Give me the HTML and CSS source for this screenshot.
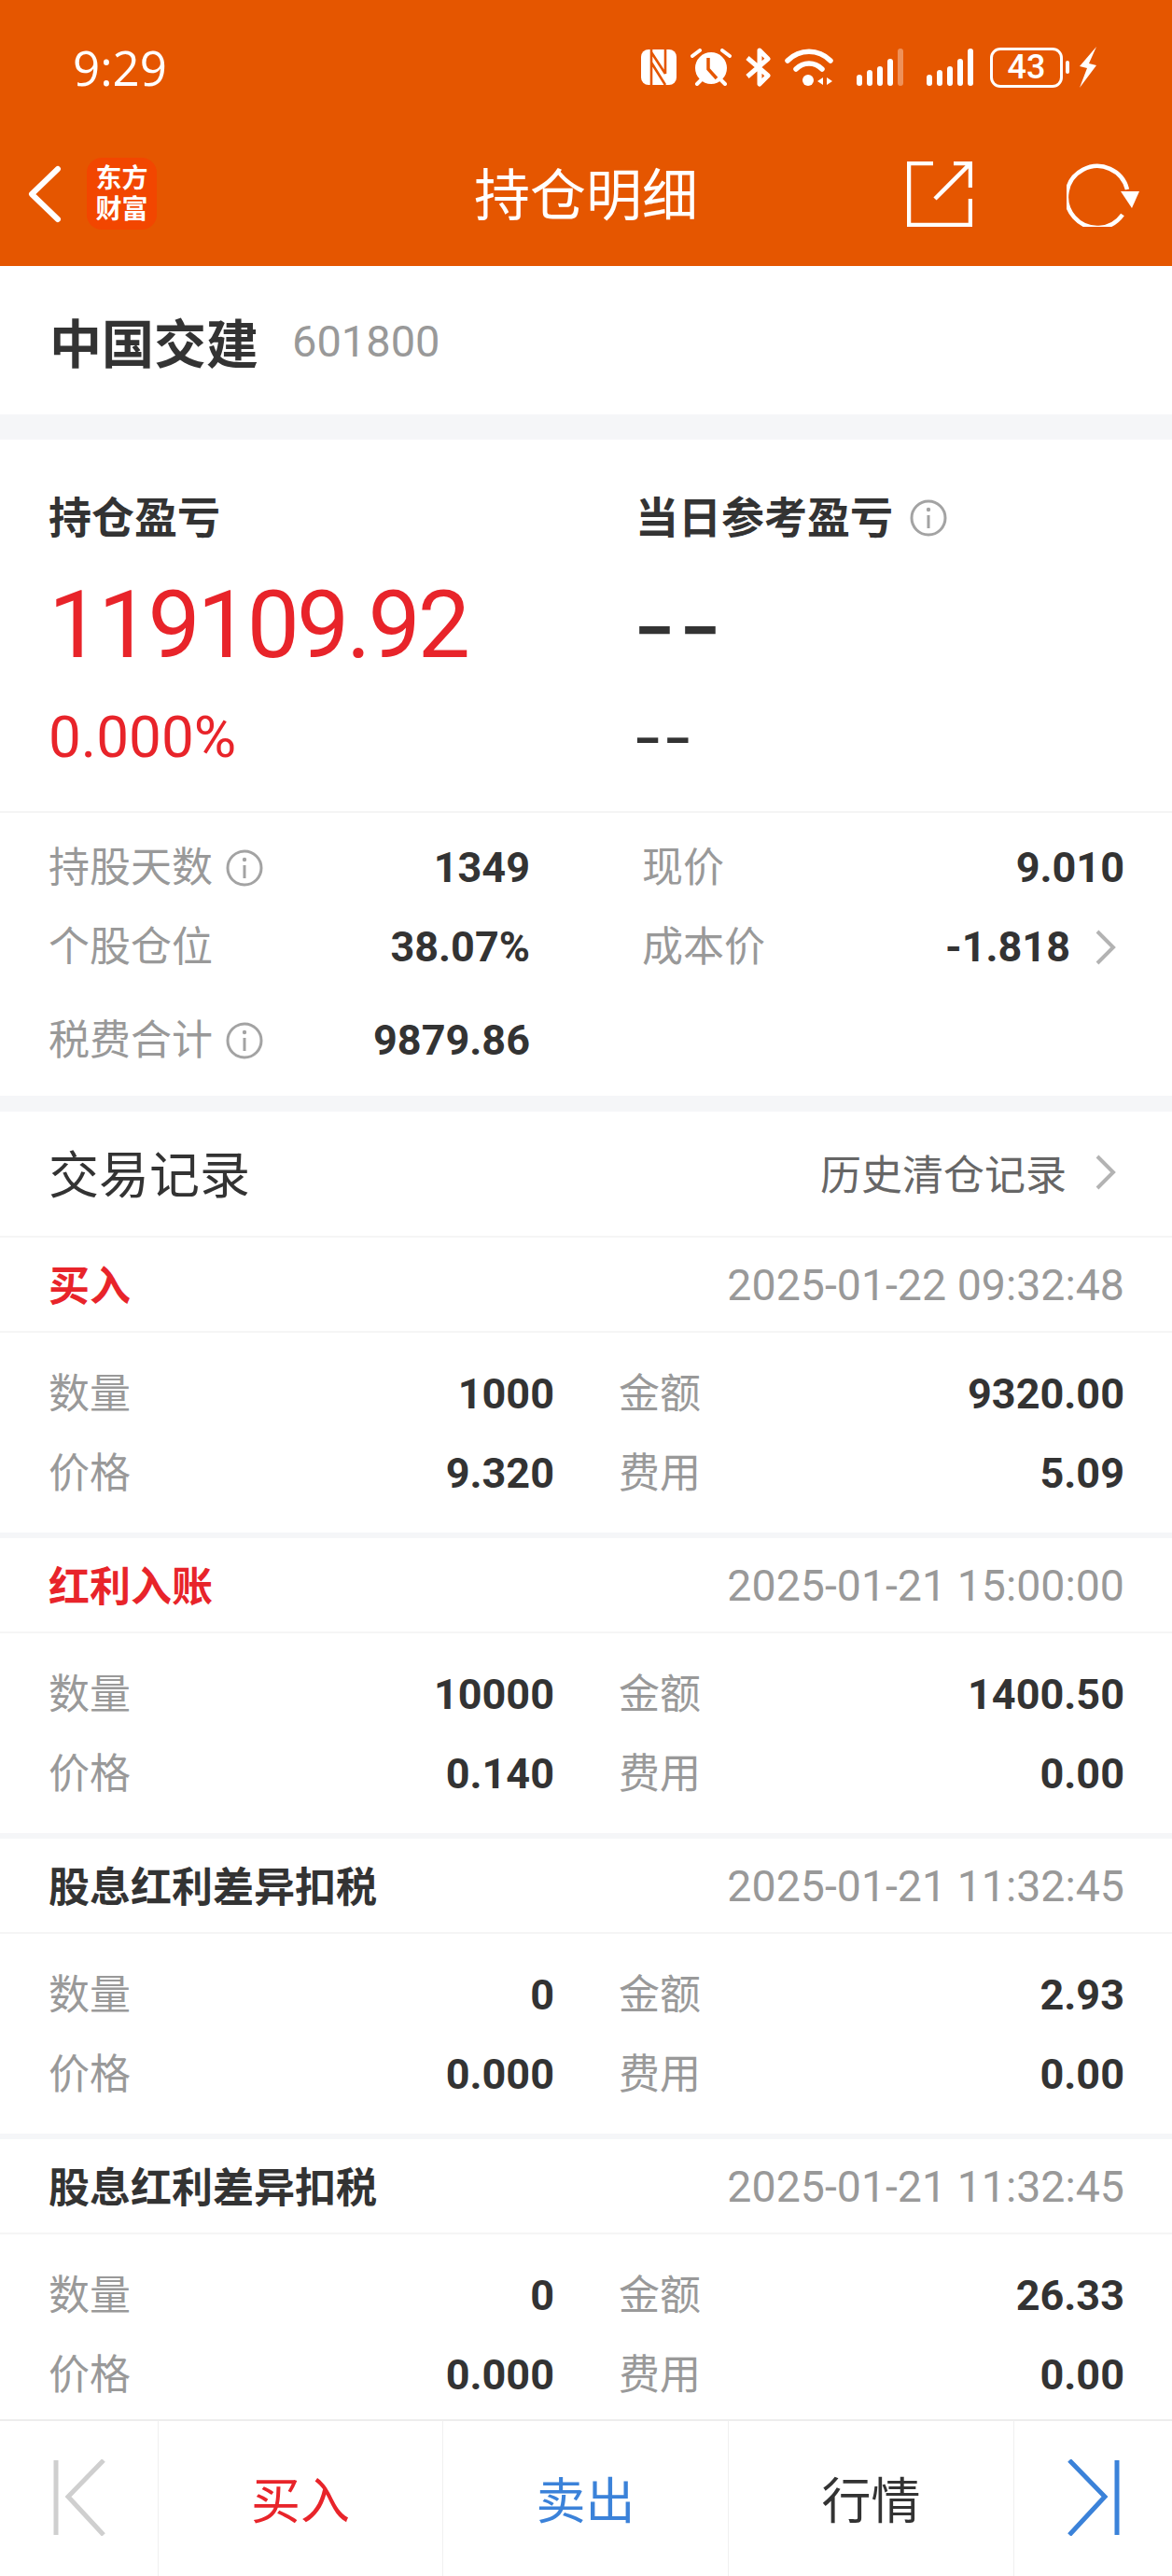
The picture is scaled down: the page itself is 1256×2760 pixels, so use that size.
FILE: index.html
```html
<!DOCTYPE html>
<html lang="zh-CN">
<head>
    <meta charset="UTF-8">
    <meta name="viewport" content="width=device-width, initial-scale=1.0">
    <title>持仓明细</title>
    <link rel="stylesheet" href="styles.css">
</head>
<body>
    <div class="app">
        <header class="topbar">
            <div class="status-bar">
                <span class="clock">9:29</span>
                <div class="status-icons">
                    <svg class="ic-nfc" width="38" height="38" viewBox="0 0 38 38"><rect width="38" height="38" rx="8" fill="#fff"/><path d="M11 0v38M26 0v26M11 3l15 23M11 14l15 24" fill="none" stroke="#e55600" stroke-width="2.6"/></svg>
                    <svg class="ic-alarm" width="44" height="40" viewBox="0 0 44 40"><circle cx="22" cy="21" r="17" fill="#fff"/><path d="M19 10v12l9 10" fill="none" stroke="#e55600" stroke-width="3.5"/><path d="M2 8l8-6M42 8l-8-6M7 38l4-4M37 38l-4-4" fill="none" stroke="#fff" stroke-width="4" stroke-linecap="round"/></svg>
                    <svg class="ic-bt" width="30" height="42" viewBox="0 0 30 42"><path d="M3 11l22 19-9 9V3l9 9-22 19" fill="none" stroke="#fff" stroke-width="5" stroke-linejoin="round"/></svg>
                    <svg class="ic-wifi" width="52" height="40" viewBox="0 0 52 40"><path d="M3 13c13-13 33-13 46 0M12 22c8-8 20-8 28 0" fill="none" stroke="#fff" stroke-width="5.5" stroke-linecap="round"/><circle cx="25" cy="34" r="6" fill="#fff"/><path d="M41 31v8l-6-4zM45 31v8l6-4z" fill="#fff"/></svg>
                    <svg class="ic-signal" width="51" height="40" viewBox="0 0 51 40"><rect y="28" width="6" height="12" rx="3" fill="#fff"/><rect x="11" y="23" width="6" height="17" rx="3" fill="#fff"/><rect x="22" y="19" width="6" height="21" rx="3" fill="#fff"/><rect x="33" y="11" width="6" height="29" rx="3" fill="#fff"/><rect x="44" width="6" height="40" rx="3" fill="#fff" fill-opacity=".35"/></svg>
                    <svg class="ic-signal" width="51" height="40" viewBox="0 0 51 40"><rect y="28" width="6" height="12" rx="3" fill="#fff"/><rect x="11" y="23" width="6" height="17" rx="3" fill="#fff"/><rect x="22" y="19" width="6" height="21" rx="3" fill="#fff"/><rect x="33" y="11" width="6" height="29" rx="3" fill="#fff"/><rect x="44" width="6" height="40" rx="3" fill="#fff"/></svg>
                    <div class="battery"><span>43</span></div>
                    <span class="battery-nub"></span>
                    <svg class="ic-bolt" width="22" height="44" viewBox="0 0 22 44"><path fill="#fff" d="M20 0L2 21l8 2L2 44l18-24-8-2z"/></svg>
                </div>
            </div>
            <nav class="nav-bar">
                <div class="nav-left">
                    <svg class="ic-back" width="36" height="62" viewBox="0 0 36 62"><path d="M32 4L4 31l28 27" fill="none" stroke="#fff" stroke-width="6" stroke-linecap="round" stroke-linejoin="round"/></svg>
                    <div class="logo"><span>东方</span><span>财富</span></div>
                </div>
                <h1>持仓明细</h1>
                <div class="nav-right">
                    <svg width="70" height="70" viewBox="0 0 70 70"><path d="M28 2H2v66h66V40M50 2h18v26M68 2L30 40" fill="none" stroke="#fff" stroke-width="4.5"/></svg>
                    <svg width="78" height="70" viewBox="0 0 78 70"><path d="M60 57A33 33 0 1 1 65 30" fill="none" stroke="#fff" stroke-width="4.5"/><path d="M58 32h20L70 50z" fill="#fff"/></svg>
                </div>
            </nav>
        </header>

        <main class="content">
            <section class="stock-name">
                <span class="name">中国交建</span>
                <span class="code">601800</span>
            </section>

            <section class="summary">
                <div class="summary-col">
                    <div class="summary-label">持仓盈亏</div>
                    <div class="summary-big red">119109.92</div>
                    <div class="summary-pct red">0.000%</div>
                </div>
                <div class="summary-col">
                    <div class="summary-label">当日参考盈亏
                        <svg class="info" width="40" height="40" viewBox="0 0 40 40"><use href="#info-icon"/></svg>
                    </div>
                    <div class="summary-big dash-big">--</div>
                    <div class="summary-pct dash-small">--</div>
                </div>
            </section>

            <section class="stats">
                <div class="stat-row">
                    <div class="stat-left">
                        <span class="muted">持股天数
                            <svg class="info" width="40" height="40" viewBox="0 0 40 40"><use href="#info-icon"/></svg>
                        </span>
                        <b>1349</b>
                    </div>
                    <div class="stat-right">
                        <span class="muted">现价</span>
                        <b>9.010</b>
                    </div>
                </div>
                <div class="stat-row">
                    <div class="stat-left">
                        <span class="muted">个股仓位</span>
                        <b>38.07%</b>
                    </div>
                    <div class="stat-right">
                        <span class="muted">成本价</span>
                        <b class="with-arrow">-1.818
                            <svg class="chevron" width="24" height="40" viewBox="0 0 24 40"><path d="M3 3l17 17L3 37" fill="none" stroke="#b3b3b3" stroke-width="4"/></svg>
                        </b>
                    </div>
                </div>
                <div class="stat-row tax">
                    <div class="stat-left">
                        <span class="muted">税费合计
                            <svg class="info" width="40" height="40" viewBox="0 0 40 40"><use href="#info-icon"/></svg>
                        </span>
                        <b>9879.86</b>
                    </div>
                </div>
            </section>

            <section class="trades">
                <div class="trades-head">
                    <span class="trades-title">交易记录</span>
                    <span class="trades-link">历史清仓记录
                        <svg class="chevron" width="24" height="40" viewBox="0 0 24 40"><path d="M3 3l17 17L3 37" fill="none" stroke="#b3b3b3" stroke-width="4"/></svg>
                    </span>
                </div>

                <article class="trade">
                    <div class="trade-head"><b class="red">买入</b><span class="muted">2025-01-22 09:32:48</span></div>
                    <div class="trade-body">
                        <div class="cell"><span class="muted">数量</span><b>1000</b></div>
                        <div class="cell"><span class="muted">金额</span><b>9320.00</b></div>
                        <div class="cell"><span class="muted">价格</span><b>9.320</b></div>
                        <div class="cell"><span class="muted">费用</span><b>5.09</b></div>
                    </div>
                </article>

                <article class="trade">
                    <div class="trade-head"><b class="red">红利入账</b><span class="muted">2025-01-21 15:00:00</span></div>
                    <div class="trade-body">
                        <div class="cell"><span class="muted">数量</span><b>10000</b></div>
                        <div class="cell"><span class="muted">金额</span><b>1400.50</b></div>
                        <div class="cell"><span class="muted">价格</span><b>0.140</b></div>
                        <div class="cell"><span class="muted">费用</span><b>0.00</b></div>
                    </div>
                </article>

                <article class="trade">
                    <div class="trade-head"><b>股息红利差异扣税</b><span class="muted">2025-01-21 11:32:45</span></div>
                    <div class="trade-body">
                        <div class="cell"><span class="muted">数量</span><b>0</b></div>
                        <div class="cell"><span class="muted">金额</span><b>2.93</b></div>
                        <div class="cell"><span class="muted">价格</span><b>0.000</b></div>
                        <div class="cell"><span class="muted">费用</span><b>0.00</b></div>
                    </div>
                </article>

                <article class="trade">
                    <div class="trade-head"><b>股息红利差异扣税</b><span class="muted">2025-01-21 11:32:45</span></div>
                    <div class="trade-body">
                        <div class="cell"><span class="muted">数量</span><b>0</b></div>
                        <div class="cell"><span class="muted">金额</span><b>26.33</b></div>
                        <div class="cell"><span class="muted">价格</span><b>0.000</b></div>
                        <div class="cell"><span class="muted">费用</span><b>0.00</b></div>
                    </div>
                </article>
            </section>
        </main>

        <footer class="bottom-bar">
            <div class="tab tab-edge">
                <svg width="56" height="82" viewBox="0 0 56 82"><path d="M3 1v80M54 1L16 40l38 41" fill="none" stroke="#cfcfcf" stroke-width="5"/></svg>
            </div>
            <div class="tab red">买入</div>
            <div class="tab blue">卖出</div>
            <div class="tab">行情</div>
            <div class="tab tab-edge">
                <svg width="56" height="82" viewBox="0 0 56 82"><path d="M53 1v80M2 1l38 39L2 81" fill="none" stroke="#3b82d9" stroke-width="5"/></svg>
            </div>
        </footer>
    </div>

    <svg class="defs" width="0" height="0">
        <symbol id="info-icon" viewBox="0 0 40 40">
            <circle cx="20" cy="20" r="18" fill="none" stroke="#a3a3a3" stroke-width="3"/>
            <path d="M20 17v14" stroke="#a3a3a3" stroke-width="3"/>
            <circle cx="20" cy="11" r="2.2" fill="#a3a3a3"/>
        </symbol>
    </svg>
</body>
</html>
```

FILE: styles.css
```css
* {
    margin: 0;
    padding: 0;
    box-sizing: border-box;
}

body {
    background: #fff;
    font-family: Roboto, "Noto Sans CJK SC", sans-serif;
    color: #333;
}

.app {
    width: 1256px;
    height: 2760px;
    display: flex;
    flex-direction: column;
    overflow: hidden;
}

.defs {
    position: absolute;
}

.red {
    color: #e8242a;
}

.blue {
    color: #3b82d9;
}

.muted {
    color: #999;
    font-weight: 400;
}

/* top */
.topbar {
    height: 285px;
    flex: none;
    background: #e55600;
    color: #fff;
}

.status-bar {
    height: 145px;
    padding: 47px 0 0 78px;
    display: flex;
    justify-content: space-between;
    align-items: flex-start;
}

.clock {
    font-size: 51px;
    line-height: 50px;
    font-weight: 500;
    font-family: "Open Sans", sans-serif;
}

.status-icons {
    display: flex;
    align-items: center;
    height: 44px;
    margin: 3px 79px 0 0;
}

.ic-nfc {
    margin-right: 15px;
}

.ic-alarm {
    margin-right: 14px;
}

.ic-bt {
    margin-right: 13px;
}

.ic-wifi {
    margin-right: 25px;
}

.ic-signal {
    margin-right: 24px;
}

.ic-signal + .ic-signal {
    margin-right: 17px;
}

.battery {
    width: 78px;
    height: 43px;
    border: 3px solid #fff;
    border-radius: 11px;
    display: flex;
    align-items: center;
    justify-content: center;
    font-size: 36px;
    font-weight: 500;
}

.battery-nub {
    width: 4px;
    height: 14px;
    background: #fff;
    border-radius: 2px;
    margin: 0 9px 0 3px;
}

.nav-bar {
    height: 140px;
    display: grid;
    grid-template-columns: 1fr auto 1fr;
    align-items: center;
    padding: 0 30px 15px;
}

.nav-bar h1 {
    font-size: 60px;
    font-weight: 400;
    line-height: 70px;
    margin-top: 7px;
}

.nav-left {
    display: flex;
    align-items: center;
    gap: 27px;
}

.logo {
    width: 75px;
    height: 77px;
    border-radius: 16px;
    background: #f24600;
    display: flex;
    flex-direction: column;
    align-items: center;
    justify-content: center;
    font-size: 28px;
    line-height: 33px;
    font-weight: 700;
}

.nav-right {
    display: flex;
    justify-content: flex-end;
    gap: 101px;
    padding-right: 5px;
}

/* content */
.content {
    flex: 1;
    min-height: 0;
    overflow: hidden;
}

.stock-name {
    height: 186px;
    padding-left: 53px;
    border-bottom: 27px solid #f5f6f8;
    display: flex;
    align-items: center;
    gap: 36px;
}

.name {
    font-size: 56px;
    font-weight: 700;
}

.code {
    font-size: 47px;
    color: #999;
    margin-top: 2px;
}

.summary {
    display: grid;
    grid-template-columns: 629px 1fr;
    padding: 59px 0 44px 52px;
    border-bottom: 2px solid #f5f5f5;
}

.summary-label {
    font-size: 46px;
    line-height: 50px;
    font-weight: 700;
    display: flex;
    align-items: center;
    gap: 18px;
}

.summary-big {
    font-size: 100px;
    line-height: 110px;
    margin-top: 35px;
    letter-spacing: -3px;
}

.summary-pct {
    font-size: 62px;
    line-height: 70px;
    margin-top: 30px;
}

.dash-big {
    font-family: Inter, sans-serif;
    font-size: 102px;
    letter-spacing: 2px;
    margin-left: -3px;
}

.dash-small {
    font-family: Inter, sans-serif;
    font-size: 70px;
    letter-spacing: 0;
    margin-left: -3px;
}

.stats {
    padding: 29px 51px 29px 52px;
    border-bottom: 17px solid #f5f6f8;
}

.stat-row {
    display: flex;
    height: 60px;
    margin-bottom: 25px;
    font-size: 45px;
    line-height: 60px;
}

.stat-row.tax {
    margin: 40px 0 0;
}

.stat-left {
    width: 516px;
    display: flex;
    justify-content: space-between;
    align-items: center;
}

.stat-right {
    margin-left: 120px;
    flex: 1;
    display: flex;
    justify-content: space-between;
    align-items: center;
}

.stat-row .muted {
    display: flex;
    align-items: center;
    gap: 14px;
    font-size: 44px;
}

.with-arrow {
    display: flex;
    align-items: center;
    gap: 26px;
    margin-right: 8px;
}

.trades-head {
    height: 135px;
    padding: 0 59px 4px 52px;
    border-bottom: 2px solid #f5f5f5;
    display: flex;
    justify-content: space-between;
    align-items: center;
}

.trades-title {
    font-size: 54px;
}

.trades-link {
    font-size: 44px;
    color: #666;
    display: flex;
    align-items: center;
    gap: 30px;
}

.trade {
    border-bottom: 6px solid #f5f6f8;
}

.trade-head {
    height: 102px;
    padding: 0 51px 2px 52px;
    border-bottom: 2px solid #f5f5f5;
    display: flex;
    justify-content: space-between;
    align-items: center;
    font-size: 44px;
}

.trade-head .muted {
    font-size: 46.5px;
    margin-top: 3px;
}

.trade-body {
    height: 214px;
    padding: 36px 51px 33px 52px;
    display: grid;
    grid-template-columns: 542px 542px;
    column-gap: 69px;
    row-gap: 25px;
    grid-auto-rows: 60px;
    font-size: 45px;
    line-height: 60px;
}

.trade-body .muted {
    font-size: 44px;
}

.cell {
    display: flex;
    justify-content: space-between;
}

/* bottom */
.bottom-bar {
    height: 168px;
    flex: none;
    border-top: 2px solid #ededed;
    display: grid;
    grid-template-columns: 169px 305px 306px 306px 170px;
    background: #fff;
}

.tab {
    display: flex;
    align-items: center;
    justify-content: center;
    font-size: 53px;
    padding-bottom: 3px;
    border-left: 1px solid #f0f0f0;
}

.tab:first-child {
    border-left: none;
}
```
